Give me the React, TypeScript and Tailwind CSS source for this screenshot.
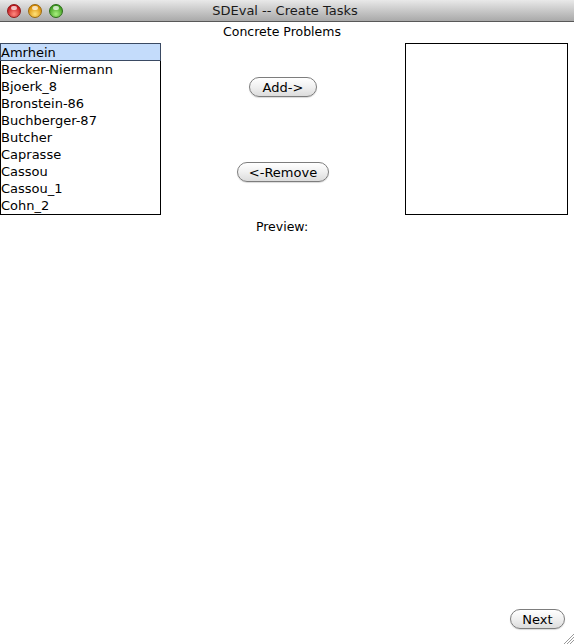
import React from "react";

const items = [
  "Amrhein",
  "Becker-Niermann",
  "Bjoerk_8",
  "Bronstein-86",
  "Buchberger-87",
  "Butcher",
  "Caprasse",
  "Cassou",
  "Cassou_1",
  "Cohn_2",
];

function Light({ from, to, border }: { from: string; to: string; border: string }) {
  return (
    <div
      className="w-[14px] h-[14px] rounded-full border relative"
      style={{
        background: `radial-gradient(circle at 50% 75%, ${to} 0%, ${from} 75%)`,
        borderColor: border,
      }}
    >
      <div className="absolute left-[3px] top-[1px] w-[6px] h-[4px] rounded-full bg-white/70" />
    </div>
  );
}

function PillButton({ label, className }: { label: string; className?: string }) {
  return (
    <button
      className={
        "h-[20px] rounded-full border border-[#7d7d7d] bg-gradient-to-b from-[#ffffff] via-[#f0f0f0] to-[#dcdcdc] text-[13px] leading-none text-black shadow-[0_1px_1px_rgba(0,0,0,0.15)] " +
        (className ?? "")
      }
    >
      {label}
    </button>
  );
}

export default function App() {
  return (
    <div
      className="w-[574px] h-[644px] bg-white flex flex-col relative overflow-hidden text-black"
      style={{ fontFamily: '"DejaVu Sans", "Liberation Sans", sans-serif' }}
    >
      {/* Title bar */}
      <div className="h-[22px] shrink-0 bg-gradient-to-b from-[#e9e9e9] to-[#a9a9a9] border-b border-[#585858] flex items-center relative">
        <div className="flex items-center gap-[7px] pl-[7px]">
          <Light from="#c0141a" to="#ff8a80" border="#8e1a1a" />
          <Light from="#d98a00" to="#ffe27a" border="#9a6a10" />
          <Light from="#3c9a1c" to="#a8f07e" border="#2c6c1a" />
        </div>
        <div className="absolute inset-0 flex items-center justify-center pr-[4px] text-[13px] text-[#1a1a1a]">
          SDEval -- Create Tasks
        </div>
      </div>

      {/* Header */}
      <div className="h-[21px] flex items-center justify-center text-[12.5px] pr-[10px]">
        Concrete Problems
      </div>

      {/* Main row */}
      <div className="flex h-[172px]">
        <div className="w-[161px] border border-black flex flex-col text-[13px] leading-[17px]">
          {items.map((it, i) => (
            <div
              key={it}
              className={
                "h-[17px] whitespace-nowrap " +
                (i === 0
                  ? "bg-[#c4dcfb] border border-[#3a4a63] -mx-[1px] -mt-[1px] h-[18px] leading-[18px]"
                  : "")
              }
            >
              {it}
            </div>
          ))}
        </div>
        <div className="flex-1 flex flex-col items-center">
          <PillButton label="Add->" className="mt-[34px] w-[68px]" />
          <PillButton label="<-Remove" className="mt-[65px] w-[92px]" />
        </div>
        <div className="w-[163px] border border-black mr-[6px]" />
      </div>

      {/* Preview */}
      <div className="h-[23px] flex items-center justify-center text-[12.5px] pr-[10px] pt-[2px]">
        Preview:
      </div>

      <div className="flex-1" />

      {/* Bottom */}
      <div className="h-[35px] flex justify-end items-start pr-[9px]">
        <PillButton label="Next" className="w-[55px]" />
      </div>

      {/* Resize grip */}
      <svg className="absolute right-0 bottom-0" width="12" height="12" viewBox="0 0 12 12">
        <line x1="2" y1="12" x2="12" y2="2" stroke="#9a9a9a" strokeWidth="1" />
        <line x1="5" y1="12" x2="12" y2="5" stroke="#9a9a9a" strokeWidth="1" />
        <line x1="8" y1="12" x2="12" y2="8" stroke="#9a9a9a" strokeWidth="1" />
      </svg>
    </div>
  );
}
